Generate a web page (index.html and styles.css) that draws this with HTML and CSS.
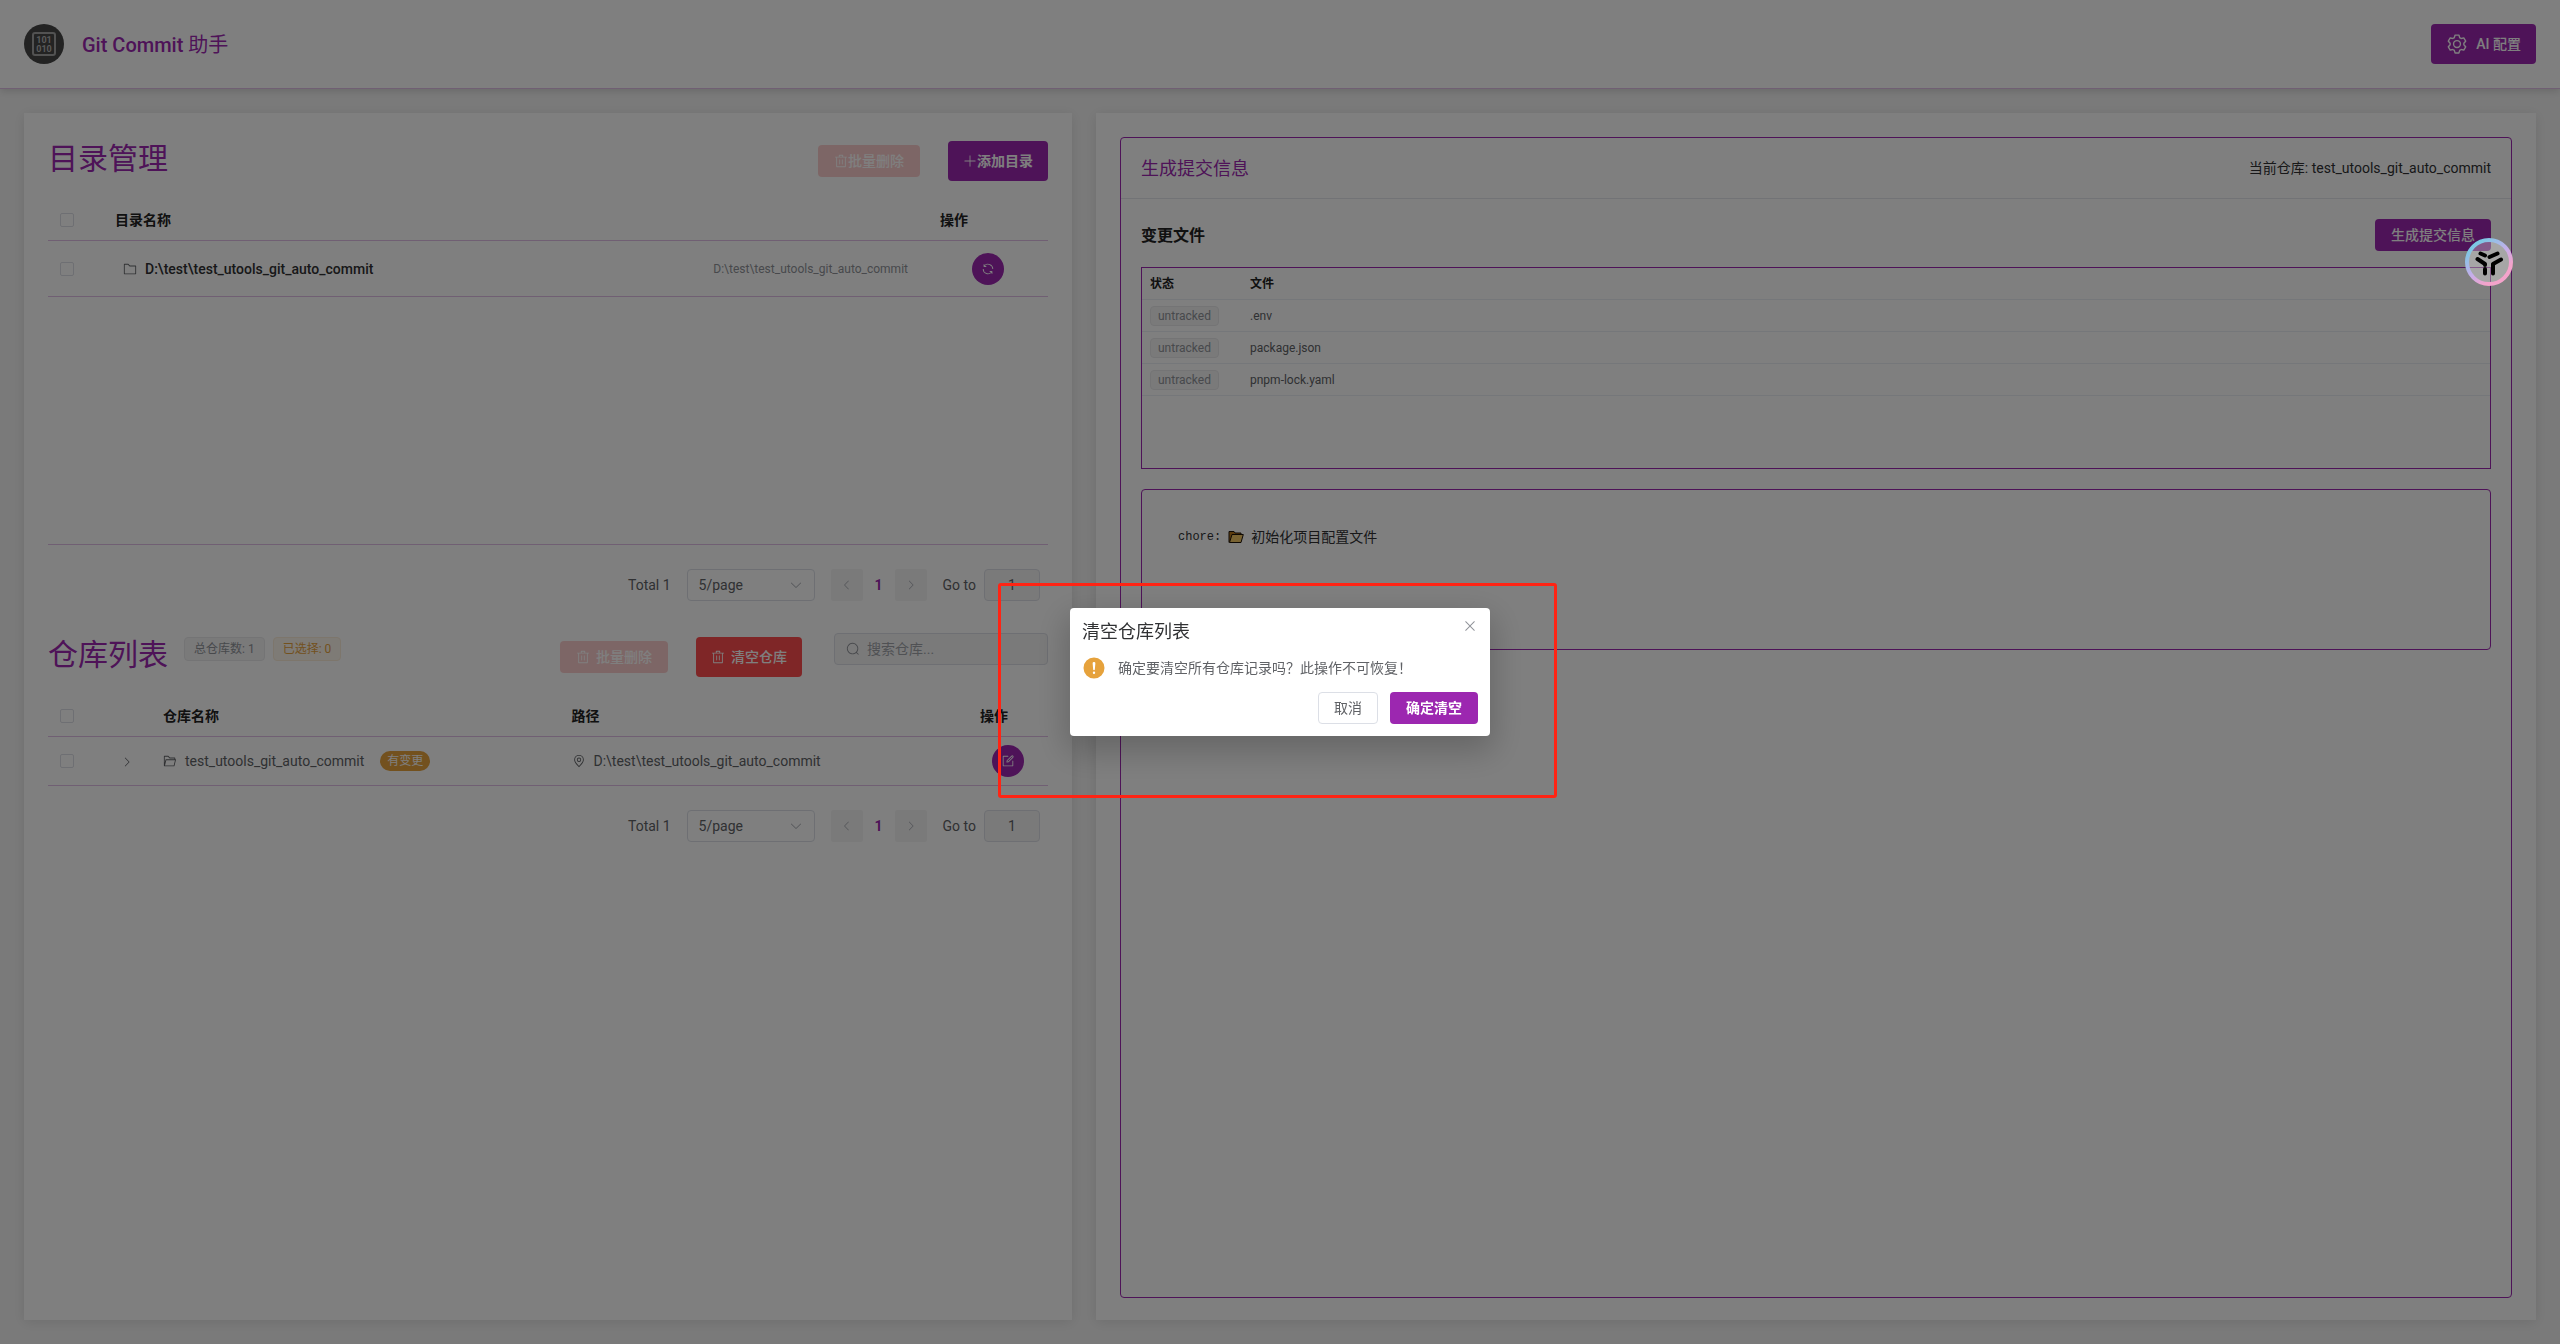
FILE: index.html
```html
<!DOCTYPE html>
<html lang="zh-CN">
<head>
<meta charset="utf-8">
<meta name="viewport" content="width=device-width, initial-scale=1">
<title>Git Commit 助手</title>
<link rel="stylesheet" href="styles.css">
</head>
<body>
<svg class="sprite" aria-hidden="true">
  <symbol id="i-folder" viewBox="0 0 1024 1024"><path d="M128 192v640h768V320H485.76L357.504 192zm-32-64h287.872l128.384 128H928a32 32 0 0 1 32 32v576a32 32 0 0 1-32 32H96a32 32 0 0 1-32-32V160a32 32 0 0 1 32-32"/></symbol>
  <symbol id="i-folder-open" viewBox="0 0 1024 1024"><path d="M878.08 448H241.92l-96 384h636.16zM832 384v-64H485.76L357.504 192H128v448l57.92-231.744A32 32 0 0 1 216.96 384zm-24.96 512H96a32 32 0 0 1-32-32V160a32 32 0 0 1 32-32h287.872l128.384 128H864a32 32 0 0 1 32 32v96h23.04a32 32 0 0 1 31.04 39.744l-112 448A32 32 0 0 1 807.04 896"/></symbol>
  <symbol id="i-delete" viewBox="0 0 1024 1024"><path d="M160 256H96a32 32 0 0 1 0-64h256V95.936a32 32 0 0 1 32-32h256a32 32 0 0 1 32 32V192h256a32 32 0 1 1 0 64h-64v672a32 32 0 0 1-32 32H192a32 32 0 0 1-32-32zm448-64v-64H416v64zM224 896h576V256H224zm192-128a32 32 0 0 1-32-32V416a32 32 0 0 1 64 0v320a32 32 0 0 1-32 32m192 0a32 32 0 0 1-32-32V416a32 32 0 0 1 64 0v320a32 32 0 0 1-32 32"/></symbol>
  <symbol id="i-plus" viewBox="0 0 1024 1024"><path d="M480 480V128a32 32 0 0 1 64 0v352h352a32 32 0 1 1 0 64H544v352a32 32 0 1 1-64 0V544H128a32 32 0 0 1 0-64z"/></symbol>
  <symbol id="i-refresh" viewBox="0 0 1024 1024"><path d="M771.776 794.88A384 384 0 0 1 128 512h64a320 320 0 0 0 555.712 216.448H654.72a32 32 0 1 1 0-64h149.056a32 32 0 0 1 32 32v148.928a32 32 0 1 1-64 0v-50.56zM276.288 295.616h92.992a32 32 0 0 1 0 64H220.16a32 32 0 0 1-32-32V178.56a32 32 0 0 1 64 0v50.56A384 384 0 0 1 896.128 512h-64a320 320 0 0 0-555.776-216.384z"/></symbol>
  <symbol id="i-down" viewBox="0 0 1024 1024"><path d="M831.872 340.864 512 652.672 192.128 340.864a30.592 30.592 0 0 0-42.752 0 29.12 29.12 0 0 0 0 41.6L489.664 714.24a32 32 0 0 0 44.672 0l340.288-331.712a29.12 29.12 0 0 0 0-41.728 30.592 30.592 0 0 0-42.752 0z"/></symbol>
  <symbol id="i-right" viewBox="0 0 1024 1024"><path d="M340.864 149.312a30.592 30.592 0 0 0 0 42.752L652.736 512 340.864 831.872a30.592 30.592 0 0 0 0 42.752 29.12 29.12 0 0 0 41.728 0L714.24 534.336a32 32 0 0 0 0-44.672L382.592 149.376a29.12 29.12 0 0 0-41.728 0z"/></symbol>
  <symbol id="i-left" viewBox="0 0 1024 1024"><path d="M609.408 149.376 277.76 489.6a32 32 0 0 0 0 44.672l331.648 340.352a29.12 29.12 0 0 0 41.728 0 30.592 30.592 0 0 0 0-42.752L339.264 511.936l311.872-319.872a30.592 30.592 0 0 0 0-42.688 29.12 29.12 0 0 0-41.728 0z"/></symbol>
  <symbol id="i-search" viewBox="0 0 1024 1024"><path d="m795.904 750.72 124.992 124.928a32 32 0 0 1-45.248 45.248L750.656 795.904a416 416 0 1 1 45.248-45.248zM480 832a352 352 0 1 0 0-704 352 352 0 0 0 0 704"/></symbol>
  <symbol id="i-location" viewBox="0 0 1024 1024"><path d="M800 416a288 288 0 1 0-576 0c0 118.144 94.528 272.128 288 456.576C705.472 688.128 800 534.144 800 416M512 960C277.312 746.688 160 565.312 160 416a352 352 0 0 1 704 0c0 149.312-117.312 330.688-352 544"/><path d="M512 512a96 96 0 1 0 0-192 96 96 0 0 0 0 192m0 64a160 160 0 1 1 0-320 160 160 0 0 1 0 320"/></symbol>
  <symbol id="i-edit" viewBox="0 0 1024 1024"><path d="M832 512a32 32 0 1 1 64 0v352a32 32 0 0 1-32 32H160a32 32 0 0 1-32-32V160a32 32 0 0 1 32-32h352a32 32 0 0 1 0 64H192v640h640z"/><path d="m469.952 554.24 52.8-7.552L847.104 222.4a32 32 0 1 0-45.248-45.248L477.44 501.44l-7.552 52.8zm422.4-422.4a96 96 0 0 1 0 135.808l-331.84 331.84a32 32 0 0 1-18.112 9.088L436.8 623.68a32 32 0 0 1-36.224-36.224l15.104-105.6a32 32 0 0 1 9.024-18.112l331.904-331.84a96 96 0 0 1 135.744 0z"/></symbol>
  <symbol id="i-close" viewBox="0 0 1024 1024"><path d="M764.288 214.592 512 466.88 259.712 214.592a31.936 31.936 0 0 0-45.12 45.12L466.752 512 214.528 764.224a31.936 31.936 0 1 0 45.12 45.184L512 557.184l252.288 252.288a31.936 31.936 0 0 0 45.12-45.12L557.12 512.064l252.288-252.352a31.936 31.936 0 1 0-45.12-45.184z"/></symbol>
  <symbol id="i-warning" viewBox="0 0 1024 1024"><path d="M512 64a448 448 0 1 1 0 896 448 448 0 0 1 0-896m0 192a58.432 58.432 0 0 0-58.24 63.744l23.36 256.384a35.072 35.072 0 0 0 69.76 0l23.296-256.384A58.432 58.432 0 0 0 512 256m0 512a51.2 51.2 0 1 0 0-102.4 51.2 51.2 0 0 0 0 102.4"/></symbol>
  <symbol id="i-setting" viewBox="0 0 1024 1024"><path d="M600.704 64a32 32 0 0 1 30.464 22.208l35.2 109.376c14.784 7.232 28.928 15.36 42.432 24.512l112.384-24.192a32 32 0 0 1 34.432 15.36L944.32 364.8a32 32 0 0 1-4.032 37.504l-77.12 85.12a357.12 357.12 0 0 1 0 49.024l77.12 85.248a32 32 0 0 1 4.032 37.504l-88.704 153.6a32 32 0 0 1-34.432 15.296L708.8 803.904c-13.44 9.088-27.648 17.28-42.368 24.512l-35.264 109.376A32 32 0 0 1 600.704 960H423.296a32 32 0 0 1-30.464-22.208L357.696 828.48a351.616 351.616 0 0 1-42.56-24.64l-112.32 24.256a32 32 0 0 1-34.432-15.36L79.68 659.2a32 32 0 0 1 4.032-37.504l77.12-85.248a357.12 357.12 0 0 1 0-48.896l-77.12-85.248A32 32 0 0 1 79.68 364.8l88.704-153.6a32 32 0 0 1 34.432-15.296l112.32 24.256c13.568-9.152 27.776-17.408 42.56-24.64l35.2-109.312A32 32 0 0 1 423.232 64H600.64zm-23.424 64H446.72l-36.352 113.088-24.512 11.968a294.113 294.113 0 0 0-34.816 20.096l-22.656 15.36-116.224-25.088-65.28 113.152 79.68 88.192-1.92 27.136a293.12 293.12 0 0 0 0 40.192l1.92 27.136-79.808 88.192 65.344 113.152 116.224-25.024 22.656 15.296a294.113 294.113 0 0 0 34.816 20.096l24.512 11.968L446.72 896h130.688l36.48-113.152 24.448-11.904a288.282 288.282 0 0 0 34.752-20.096l22.592-15.296 116.288 25.024 65.28-113.152-79.744-88.192 1.92-27.136a293.12 293.12 0 0 0 0-40.256l-1.92-27.136 79.808-88.128-65.344-113.152-116.288 24.96-22.592-15.232a287.616 287.616 0 0 0-34.752-20.096l-24.448-11.904L577.344 128zM512 320a192 192 0 1 1 0 384 192 192 0 0 1 0-384m0 64a128 128 0 1 0 0 256 128 128 0 0 0 0-256"/></symbol>
</svg>

<div class="page">
  <header class="topbar">
    <div class="brand">
      <svg class="logo" viewBox="0 0 40 40" aria-hidden="true">
        <circle cx="20" cy="20" r="20" fill="#474747"/>
        <rect x="9" y="9" width="22" height="22" rx="2" fill="none" stroke="#a4a4a4" stroke-width="2"/>
        <text x="20" y="19" class="logo-bits">101</text>
        <text x="20" y="28" class="logo-bits">010</text>
      </svg>
      <h1 class="brand-name">Git Commit <span class="brand-suffix">助手</span></h1>
    </div>
    <button class="btn btn-primary btn-tall btn-config" type="button"><svg class="icon icon-lg"><use href="#i-setting"/></svg>AI 配置</button>
  </header>

  <main class="columns">
    <section class="panel">
      <div class="section-head">
        <h2 class="section-title">目录管理</h2>
        <div class="actions">
          <button class="btn btn-danger-soft btn-tight" type="button" disabled><svg class="icon"><use href="#i-delete"/></svg>批量删除</button>
          <button class="btn btn-primary btn-tall btn-tight" type="button"><svg class="icon"><use href="#i-plus"/></svg>添加目录</button>
        </div>
      </div>
      <div class="dir-list">
        <table class="grid">
          <colgroup><col class="col-check"><col><col class="col-dir-op"></colgroup>
          <thead><tr><th><input type="checkbox" class="check" aria-label="全选目录"></th><th>目录名称</th><th>操作</th></tr></thead>
          <tbody><tr class="row-dir">
            <td><input type="checkbox" class="check" aria-label="选择目录"></td>
            <td><div class="dir-cell"><svg class="icon"><use href="#i-folder"/></svg><span class="dir-name">D:\test\test_utools_git_auto_commit</span><span class="dir-path">D:\test\test_utools_git_auto_commit</span></div></td>
            <td class="center"><button class="round" type="button" aria-label="刷新"><svg class="icon"><use href="#i-refresh"/></svg></button></td>
          </tr></tbody>
        </table>
      </div>
      <nav class="pager" aria-label="目录分页">
        <span>Total 1</span>
        <span class="select-box"><select class="select" aria-label="每页条数"><option>5/page</option></select><svg class="icon"><use href="#i-down"/></svg></span>
        <span class="pages">
          <button class="step" type="button" aria-label="上一页" disabled><svg class="icon icon-sm"><use href="#i-left"/></svg></button>
          <a class="current" href="#">1</a>
          <button class="step" type="button" aria-label="下一页" disabled><svg class="icon icon-sm"><use href="#i-right"/></svg></button>
        </span>
        <label class="goto">Go to<input class="goto-input" type="text" value="1"></label>
      </nav>

      <div class="section-head section-head-repo">
        <div class="title-group">
          <h2 class="section-title">仓库列表</h2>
          <div class="tags"><span class="tag">总仓库数: 1</span><span class="tag tag-warn">已选择: 0</span></div>
        </div>
        <div class="actions">
          <button class="btn btn-danger-soft" type="button" disabled><svg class="icon"><use href="#i-delete"/></svg>批量删除</button>
          <button class="btn btn-danger btn-tall" type="button"><svg class="icon"><use href="#i-delete"/></svg>清空仓库</button>
        </div>
        <label class="search"><svg class="icon"><use href="#i-search"/></svg><input class="search-input" type="text" placeholder="搜索仓库..." aria-label="搜索仓库"></label>
      </div>
      <table class="grid">
        <colgroup><col class="col-check"><col class="col-expand"><col><col><col class="col-repo-op"></colgroup>
        <thead><tr><th><input type="checkbox" class="check" aria-label="全选仓库"></th><th></th><th>仓库名称</th><th>路径</th><th>操作</th></tr></thead>
        <tbody><tr class="row-repo">
          <td><input type="checkbox" class="check" aria-label="选择仓库"></td>
          <td class="center"><button class="expand" type="button" aria-label="展开"><svg class="icon icon-sm"><use href="#i-right"/></svg></button></td>
          <td><div class="repo-cell"><svg class="icon"><use href="#i-folder-open"/></svg><span>test_utools_git_auto_commit</span><span class="badge">有变更</span></div></td>
          <td><div class="repo-cell"><svg class="icon"><use href="#i-location"/></svg><span>D:\test\test_utools_git_auto_commit</span></div></td>
          <td class="center"><button class="round" type="button" aria-label="编辑"><svg class="icon"><use href="#i-edit"/></svg></button></td>
        </tr></tbody>
      </table>
      <nav class="pager" aria-label="仓库分页">
        <span>Total 1</span>
        <span class="select-box"><select class="select" aria-label="每页条数"><option>5/page</option></select><svg class="icon"><use href="#i-down"/></svg></span>
        <span class="pages">
          <button class="step" type="button" aria-label="上一页" disabled><svg class="icon icon-sm"><use href="#i-left"/></svg></button>
          <a class="current" href="#">1</a>
          <button class="step" type="button" aria-label="下一页" disabled><svg class="icon icon-sm"><use href="#i-right"/></svg></button>
        </span>
        <label class="goto">Go to<input class="goto-input" type="text" value="1"></label>
      </nav>
    </section>

    <section class="panel">
      <div class="card">
        <div class="card-head">
          <h2 class="card-title">生成提交信息</h2>
          <span class="card-repo">当前仓库: test_utools_git_auto_commit</span>
        </div>
        <div class="card-body">
          <div class="files-head">
            <h3 class="files-title">变更文件</h3>
            <button class="btn btn-primary btn-plain" type="button">生成提交信息</button>
          </div>
          <div class="files-box">
            <table class="files">
              <colgroup><col class="col-status"><col></colgroup>
              <thead><tr><th>状态</th><th>文件</th></tr></thead>
              <tbody>
                <tr><td><span class="tag tag-sm">untracked</span></td><td>.env</td></tr>
                <tr><td><span class="tag tag-sm">untracked</span></td><td>package.json</td></tr>
                <tr><td><span class="tag tag-sm">untracked</span></td><td>pnpm-lock.yaml</td></tr>
              </tbody>
            </table>
          </div>
          <div class="message">
            <code class="message-type">chore:</code>
            <svg class="message-icon" viewBox="0 0 16 14" aria-hidden="true"><path d="M1 12.500V1.500h5l1 1.500h6v2" fill="#b8791c" stroke="#1c1208"/><path d="M1.500 12.500 4 4.500h11.300l-2.300 8z" fill="#f3c765" stroke="#1c1208"/></svg>
            <span>初始化项目配置文件</span>
          </div>
        </div>
      </div>
    </section>
  </main>
</div>

<div class="overlay">
  <div class="dialog" role="dialog" aria-modal="true" aria-labelledby="dlg-title">
    <div class="dialog-head">
      <h2 class="dialog-title" id="dlg-title">清空仓库列表</h2>
      <button class="dialog-close" type="button" aria-label="关闭"><svg class="icon icon-md"><use href="#i-close"/></svg></button>
    </div>
    <div class="dialog-body"><svg class="icon icon-xl"><use href="#i-warning"/></svg><p>确定要清空所有仓库记录吗？此操作不可恢复！</p></div>
    <div class="dialog-foot">
      <button class="btn btn-default" type="button">取消</button>
      <button class="btn btn-primary" type="button">确定清空</button>
    </div>
    <div class="highlight"></div>
  </div>
</div>

<button class="floater" type="button" aria-label="助手">
  <svg viewBox="0 0 48 48" aria-hidden="true">
    <defs><linearGradient id="ring" x1="0.200" y1="0.100" x2="0.800" y2="0.900"><stop offset="0" stop-color="#7cc8e4"/><stop offset="0.500" stop-color="#c5aeea"/><stop offset="0.850" stop-color="#f4a3cb"/></linearGradient></defs>
    <circle cx="24" cy="24" r="22" fill="#fff" fill-opacity="0.300" stroke="url(#ring)" stroke-width="4"/>
    <g fill="none" stroke="#000" stroke-width="4" stroke-linecap="round" stroke-linejoin="round"><path d="M15.500 15.500 20 17.500M24.500 19 32.500 15.500M12.500 21 20 26v1M20 31v4.500M36 21.500 28 26v9.500"/></g>
  </svg>
</button>
</body>
</html>
```
FILE: styles.css
```css
:root {
  --purple: #9c27b0;
  --line: #e1bee7;
  --text: #606266;
  --text-strong: #303133;
  --muted: #909399;
}

* { box-sizing: border-box; }

body {
  margin: 0;
  background: #f5f5f5;
  color: var(--text);
  font-family: Roboto, "Noto Sans CJK SC", sans-serif;
  font-size: 14px;
  line-height: 20px;
}

h1, h2, h3, p { margin: 0; }
button, input, select { font: inherit; color: inherit; }
button { cursor: pointer; }

.sprite { display: none; }
.icon { width: 14px; height: 14px; flex: none; fill: currentColor; display: block; }
.icon-sm { width: 12px; height: 12px; }
.icon-md { width: 16px; height: 16px; }
.icon-lg { width: 22px; height: 22px; }
.icon-xl { width: 24px; height: 24px; color: #e6a23c; }

.page { min-height: 100vh; display: flex; flex-direction: column; }

/* Top bar */
.topbar {
  display: flex;
  align-items: center;
  justify-content: space-between;
  padding: 24px;
  background: #fff;
  border-bottom: 1px solid var(--line);
  box-shadow: 0 2px 8px rgba(0, 0, 0, 0.15);
}
.brand { display: flex; align-items: center; gap: 18px; }
.logo { width: 40px; height: 40px; display: block; }
.logo-bits { font: 700 9px Roboto, sans-serif; fill: #b4b4b4; text-anchor: middle; }
.brand-name { padding-top: 2px; font-size: 20px; line-height: 28px; font-weight: 500; color: var(--purple); }
.brand-suffix { font-weight: 400; }

/* Buttons */
.btn {
  display: inline-flex;
  align-items: center;
  justify-content: center;
  gap: 6px;
  height: 32px;
  padding: 0 16px;
  border: 0;
  border-radius: 4px;
  font-weight: 700;
  white-space: nowrap;
}
.btn-tall { height: 40px; padding: 0 15px; }
.btn-tight { gap: 0; }
.btn-config { gap: 8px; font-weight: 500; }
.btn-plain { font-weight: 500; }
.btn-primary { background: var(--purple); color: #fff; }
.btn-danger { background: #ff4d4f; color: #fff; font-weight: 500; }
.btn-danger-soft { background: #fbcdcd; color: #fff; font-weight: 500; }
.btn-default { padding: 0 15px; background: #fff; border: 1px solid #dcdfe6; font-weight: 400; }

.round {
  display: inline-flex;
  align-items: center;
  justify-content: center;
  width: 32px;
  height: 32px;
  padding: 0;
  border: 0;
  border-radius: 50%;
  background: var(--purple);
  color: #fff;
  vertical-align: middle;
}

/* Panels */
.columns {
  flex: 1;
  display: grid;
  grid-template-columns: 1048fr 1440fr;
  gap: 24px;
  padding: 24px;
}
.panel {
  min-width: 0;
  display: flex;
  flex-direction: column;
  padding: 24px 24px 22px;
  background: #fff;
  box-shadow: 0 2px 12px rgba(0, 0, 0, 0.1);
}

.section-head {
  display: flex;
  justify-content: space-between;
  min-height: 48px;
  margin-bottom: 15px;
}
.section-head-repo { margin-top: 32px; }
.section-title { font-size: 30px; line-height: 44px; font-weight: 400; color: var(--purple); }
.title-group { display: flex; gap: 16px; margin-right: auto; }
.actions { display: flex; align-items: center; gap: 28px; }

.tags { display: flex; align-items: center; gap: 8px; height: 32px; }
.tag {
  display: inline-flex;
  align-items: center;
  height: 24px;
  padding: 0 9px;
  border: 1px solid #e9e9eb;
  border-radius: 4px;
  background: #f4f4f5;
  color: var(--muted);
  font-size: 12px;
}
.tag-warn { background: #fdf6ec; border-color: #faecd8; color: #e6a23c; }
.tag-sm { height: 20px; padding: 0 7px; }

.search {
  display: flex;
  align-items: center;
  gap: 7px;
  width: 214px;
  height: 32px;
  margin-left: 32px;
  padding: 0 11px;
  border: 1px solid #dcdfe6;
  border-radius: 4px;
  background: #f5f5f5;
  color: var(--muted);
}
.search-input { flex: 1; min-width: 0; padding: 0; border: 0; background: none; outline: 0; }
.search-input::placeholder { color: #a0a3a9; }

/* Directory and repository tables */
.dir-list { min-height: 345px; border-bottom: 1px solid var(--line); }
.grid { width: 100%; table-layout: fixed; border-collapse: separate; border-spacing: 0; }
.grid th, .grid td { padding: 0 12px; text-align: left; border-bottom: 1px solid var(--line); }
.grid th { height: 41px; color: #222; font-weight: 700; }
.grid .center { text-align: center; }
.row-dir td { height: 56px; }
.row-repo td { height: 49px; }
.col-check { width: 55px; }
.col-expand { width: 48px; }
.col-dir-op { width: 120px; }
.col-repo-op { width: 80px; }

.check {
  appearance: none;
  display: block;
  width: 14px;
  height: 14px;
  margin: 0;
  border: 1px solid #dcdfe6;
  border-radius: 2px;
  background: #fff;
}
.dir-cell { display: flex; align-items: center; gap: 8px; padding: 0 8px; }
.dir-name { color: var(--text-strong); font-weight: 500; }
.dir-path { margin-left: auto; color: var(--muted); font-size: 12px; }
.repo-cell { display: flex; align-items: center; gap: 8px; }
.expand { display: inline-flex; padding: 0; border: 0; background: none; vertical-align: middle; }
.badge {
  margin-left: 8px;
  padding: 0 7px;
  border-radius: 10px;
  background: #e6a23c;
  color: #fff;
  font-size: 12px;
}

/* Pagination */
.pager {
  display: flex;
  align-items: center;
  justify-content: flex-end;
  gap: 16px;
  margin-top: 24px;
  padding-right: 8px;
}
.select-box {
  display: grid;
  grid-template-columns: 1fr 38px;
  align-items: center;
  width: 128px;
  height: 32px;
}
.select {
  appearance: none;
  grid-area: 1 / 1 / 2 / 3;
  height: 32px;
  padding: 0 11px;
  border: 1px solid #dcdfe6;
  border-radius: 4px;
  background: none;
}
.select-box .icon { grid-area: 1 / 2; justify-self: center; color: #a8abb2; pointer-events: none; }
.pages { display: flex; align-items: center; }
.step {
  display: inline-flex;
  align-items: center;
  justify-content: center;
  width: 32px;
  height: 32px;
  padding: 0;
  border: 0;
  border-radius: 2px;
  background: #f5f5f5;
  color: #a8abb2;
}
.current { width: 32px; text-align: center; color: var(--purple); font-weight: 700; text-decoration: none; }
.goto { display: flex; align-items: center; gap: 8px; }
.goto-input {
  width: 56px;
  height: 32px;
  padding: 0 11px;
  border: 1px solid #dcdfe6;
  border-radius: 4px;
  background: #f5f5f5;
  text-align: center;
}

/* Commit message card */
.card { flex: 1; border: 1px solid var(--purple); border-radius: 4px; }
.card-head {
  display: flex;
  align-items: center;
  justify-content: space-between;
  height: 61px;
  padding: 0 20px;
  border-bottom: 1px solid #e4e7ed;
}
.card-title { padding-top: 2px; font-size: 18px; line-height: 24px; font-weight: 400; color: var(--purple); }
.card-repo { color: var(--text-strong); }
.card-body { padding: 20px; }
.files-head { display: flex; align-items: center; justify-content: space-between; margin-bottom: 16px; }
.files-title { padding-top: 2px; font-size: 16px; line-height: 24px; font-weight: 700; color: #222; }
.files-box { min-height: 202px; border: 1px solid var(--purple); }
.files { width: 100%; table-layout: fixed; border-collapse: separate; border-spacing: 0; font-size: 12px; }
.files th, .files td { height: 32px; padding: 0 8px; text-align: left; border-bottom: 1px solid #ebeef5; }
.files th { color: #222; font-weight: 700; }
.files .tag { vertical-align: middle; }
.col-status { width: 100px; }
.message {
  display: flex;
  align-items: center;
  align-content: flex-start;
  flex-wrap: wrap;
  gap: 7px;
  min-height: 161px;
  margin-top: 20px;
  padding: 36px;
  border: 1px solid var(--purple);
  border-radius: 4px;
  color: var(--text-strong);
  line-height: 22px;
}
.message-type { font-family: "Liberation Mono", monospace; font-size: 12px; }
.message-icon { width: 16px; height: 14px; }

/* Confirm dialog */
.overlay {
  position: fixed;
  inset: 0;
  display: flex;
  align-items: center;
  justify-content: center;
  background: rgba(0, 0, 0, 0.5);
}
.dialog {
  position: relative;
  width: 420px;
  padding: 12px;
  border-radius: 4px;
  background: #fff;
  box-shadow: 0 12px 32px 4px rgba(0, 0, 0, 0.2);
}
.dialog-head { display: flex; justify-content: space-between; height: 36px; }
.dialog-title { font-size: 18px; line-height: 24px; font-weight: 400; color: var(--text-strong); }
.dialog-close { display: flex; height: 16px; margin-top: -2px; padding: 0; border: 0; background: none; color: var(--muted); }
.dialog-body { display: flex; align-items: center; gap: 12px; height: 24px; margin-bottom: 12px; }
.dialog-foot { display: flex; justify-content: flex-end; gap: 12px; }
.highlight {
  position: absolute;
  left: -72px;
  top: -25px;
  width: 559px;
  height: 215px;
  border: 3px solid #ff2414;
  border-radius: 3px;
  pointer-events: none;
}

/* Floating assistant button */
.floater {
  position: fixed;
  top: 238px;
  right: 47px;
  width: 48px;
  height: 48px;
  padding: 0;
  border: 0;
  border-radius: 50%;
  background: none;
}
.floater svg { display: block; width: 48px; height: 48px; }
```
